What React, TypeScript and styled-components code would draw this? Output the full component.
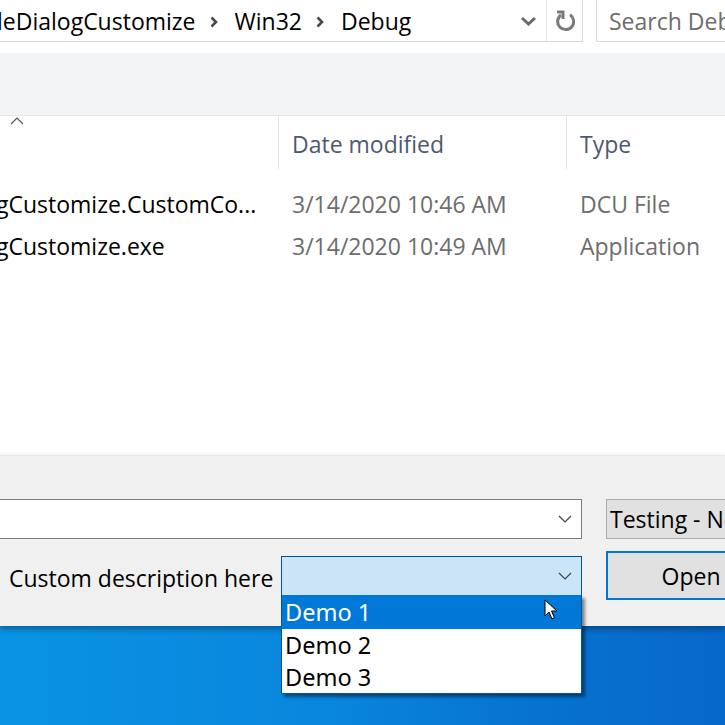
import React from "react";
import styled, { createGlobalStyle } from "styled-components";

const Global = createGlobalStyle`
  html, body { margin: 0; padding: 0; }
  body { width: 725px; height: 725px; overflow: hidden; font-family: "Open Sans", "Noto Sans", sans-serif; }
  * { box-sizing: border-box; }
`;

const Page = styled.div`
  width: 725px;
  height: 725px;
  display: flex;
  flex-direction: column;
  overflow: hidden;
  position: relative;
  background: #fff;
`;

const AddressRow = styled.div`
  height: 42px;
  display: flex;
  gap: 13px;
  background: #fff;
  flex-shrink: 0;
`;

const AddressBox = styled.div`
  width: 583px;
  display: flex;
  border-right: 1px solid #d9d9d9;
  border-bottom: 1px solid #d9d9d9;
`;

const Crumbs = styled.div`
  flex: 1;
  display: flex;
  align-items: center;
  margin-left: -3px;
  font-size: 23px;
  color: #000;
  white-space: nowrap;
  overflow: hidden;
`;

const Sep = styled.span`
  display: inline-flex;
  align-items: center;
  margin: 2px 17px 0 14px;
`;

const AddrIconCell = styled.div<{ $w: number; $divider?: boolean }>`
  width: ${(p) => p.$w}px;
  display: flex;
  align-items: center;
  justify-content: center;
  border-left: ${(p) => (p.$divider ? "1px solid #e3e3e3" : "none")};
`;

const SearchBox = styled.div`
  flex: 1;
  display: flex;
  align-items: center;
  padding-left: 12px;
  font-size: 23px;
  color: #6d6d6d;
  border-left: 1px solid #d9d9d9;
  border-bottom: 1px solid #d9d9d9;
  white-space: nowrap;
  overflow: hidden;
`;

const Gap = styled.div`
  height: 11px;
  flex-shrink: 0;
  background: #fff;
`;

const Toolbar = styled.div`
  height: 63px;
  flex-shrink: 0;
  background: #f3f4f6;
  border-bottom: 1px solid #e5e5e5;
`;

const FileList = styled.div`
  flex: 0 0 339px;
  background: #fff;
  display: flex;
  flex-direction: column;
`;

const Cols = "278px 288px 1fr";

const HeaderRow = styled.div`
  height: 53px;
  display: grid;
  grid-template-columns: ${Cols};
`;

const HeaderCell = styled.div<{ $first?: boolean }>`
  position: relative;
  display: flex;
  align-items: center;
  padding-left: 13px;
  padding-top: 2px;
  font-size: 23px;
  color: #4c5a6e;
  white-space: nowrap;
  border-left: ${(p) => (p.$first ? "none" : "1px solid #e5e5e5")};
`;

const SortArrow = styled.svg`
  position: absolute;
  left: 10px;
  top: 1px;
`;

const Rows = styled.div`
  padding-top: 14px;
  display: flex;
  flex-direction: column;
`;

const Row = styled.div`
  height: 42px;
  display: grid;
  grid-template-columns: ${Cols};
  align-items: center;
  font-size: 23px;
  white-space: nowrap;
`;

const Cell = styled.div<{ $muted?: boolean; $name?: boolean }>`
  padding-left: ${(p) => (p.$name ? "0" : "14px")};
  margin-left: ${(p) => (p.$name ? "-4px" : "0")};
  color: ${(p) => (p.$muted ? "#6d6d6d" : "#000")};
  overflow: hidden;
`;

const Panel = styled.div`
  flex: 0 0 171px;
  background: #f0f0f0;
  border-top: 1px solid #e8e8e8;
  box-shadow: 0 3px 6px rgba(0, 0, 0, 0.35);
  position: relative;
  z-index: 1;
  padding-top: 43px;
  display: grid;
  grid-template-columns: 582px 1fr;
  grid-template-rows: 40px 49px;
  column-gap: 24px;
  row-gap: 12px;
`;

const Combo = styled.div<{ $focus?: boolean }>`
  position: relative;
  height: 40px;
  display: flex;
  align-items: center;
  justify-content: flex-end;
  padding-right: 9px;
  background: ${(p) => (p.$focus ? "#cce4f7" : "#fff")};
  border: 1px solid ${(p) => (p.$focus ? "#005499" : "#7a7a7a")};
`;

const FileNameCombo = styled(Combo)`
  margin-left: -10px;
  align-self: start;
`;

const CustomLine = styled.div`
  display: flex;
  align-items: flex-end;
  padding-left: 9px;
`;

const Label = styled.div`
  font-size: 23px;
  color: #000;
  white-space: nowrap;
  padding-bottom: 6px;
`;

const CustomCombo = styled(Combo)`
  flex: 0 0 301px;
  margin-left: auto;
  height: 40px;
  margin-bottom: 4px;
`;

const DropList = styled.div`
  position: absolute;
  left: -1px;
  right: -1px;
  top: 38px;
  background: #fff;
  border: 1px solid #005499;
  border-top: none;
  box-shadow: 3px 3px 3px rgba(0, 0, 0, 0.45);
  font-family: "Noto Sans", "Open Sans", sans-serif;
  font-size: 23.5px;
  z-index: 5;
`;

const DropItem = styled.div<{ $active?: boolean }>`
  height: ${(p) => (p.$active ? "34px" : "32px")};
  display: flex;
  align-items: center;
  padding-left: 3px;
  background: ${(p) => (p.$active ? "#0078d7" : "#fff")};
  color: ${(p) => (p.$active ? "#fff" : "#000")};
  position: relative;
`;

const Cursor = styled.svg`
  position: absolute;
  left: 262px;
  top: 4px;
`;

const Button = styled.div<{ $default?: boolean }>`
  width: 170px;
  display: flex;
  align-items: center;
  justify-content: ${(p) => (p.$default ? "center" : "flex-start")};
  padding-left: ${(p) => (p.$default ? "0" : "3px")};
  font-size: 23px;
  color: #000;
  background: #e1e1e1;
  border: ${(p) => (p.$default ? "2px solid #0078d7" : "1px solid #adadad")};
  white-space: nowrap;
  overflow: hidden;
`;

const TestingButton = styled(Button)`
  height: 40px;
`;

const OpenButton = styled(Button)`
  height: 49px;
`;

const Desktop = styled.div`
  flex: 1;
  background: linear-gradient(90deg, #0a93e5 0%, #0986dd 45%, #0772d0 75%, #0768cb 100%);
`;

const Chevron = ({ color = "#444" }: { color?: string }) => (
  <svg width="14" height="8" viewBox="0 0 14 8">
    <path d="M1 1 L7 7 L13 1" fill="none" stroke={color} strokeWidth="1.2" />
  </svg>
);

const CrumbSep = () => (
  <svg width="8" height="12" viewBox="0 0 8 12">
    <path d="M1.5 1.5 L6 6 L1.5 10.5" fill="none" stroke="#4a4a4a" strokeWidth="2.6" />
  </svg>
);

export default function App() {
  return (
    <>
      <Global />
      <Page>
        <AddressRow>
          <AddressBox>
            <Crumbs>
              leDialogCustomize
              <Sep><CrumbSep /></Sep>
              Win32
              <Sep><CrumbSep /></Sep>
              Debug
            </Crumbs>
            <AddrIconCell $w={36}>
              <svg width="17" height="10" viewBox="0 0 17 10">
                <path d="M2 2 L8.5 8 L15 2" fill="none" stroke="#6a6a6a" strokeWidth="3" />
              </svg>
            </AddrIconCell>
            <AddrIconCell $w={36} $divider>
              <svg width="20" height="26" viewBox="0 0 20 26">
                <path d="M6 7 A8 8 0 1 0 15 6.8" fill="none" stroke="#7a7a7a" strokeWidth="3" />
                <path d="M2 4 L8 4 L8 11" fill="none" stroke="#7a7a7a" strokeWidth="3" />
              </svg>
            </AddrIconCell>
          </AddressBox>
          <SearchBox>Search Debug</SearchBox>
        </AddressRow>
        <Gap />
        <Toolbar />
        <FileList>
          <HeaderRow>
            <HeaderCell $first>
              <SortArrow width="14" height="8" viewBox="0 0 14 8">
                <path d="M1 7 L7 1 L13 7" fill="none" stroke="#555" strokeWidth="1.2" />
              </SortArrow>
            </HeaderCell>
            <HeaderCell>Date modified</HeaderCell>
            <HeaderCell>Type</HeaderCell>
          </HeaderRow>
          <Rows>
            <Row>
              <Cell $name>gCustomize.CustomCo...</Cell>
              <Cell $muted>3/14/2020 10:46 AM</Cell>
              <Cell $muted>DCU File</Cell>
            </Row>
            <Row>
              <Cell $name>gCustomize.exe</Cell>
              <Cell $muted>3/14/2020 10:49 AM</Cell>
              <Cell $muted>Application</Cell>
            </Row>
          </Rows>
        </FileList>
        <Panel>
          <FileNameCombo>
            <Chevron />
          </FileNameCombo>
          <TestingButton>Testing - None</TestingButton>
          <CustomLine>
            <Label>Custom description here</Label>
            <CustomCombo $focus>
              <Chevron />
              <DropList>
                <DropItem $active>
                  Demo 1
                  <Cursor width="14" height="22" viewBox="0 0 14 22">
                    <path
                      d="M1 1 L1 17 L5 13 L8 20 L10.5 19 L7.5 12 L13 12 Z"
                      fill="#fff"
                      stroke="#000"
                      strokeWidth="1"
                    />
                  </Cursor>
                </DropItem>
                <DropItem>Demo 2</DropItem>
                <DropItem>Demo 3</DropItem>
              </DropList>
            </CustomCombo>
          </CustomLine>
          <OpenButton $default>Open</OpenButton>
        </Panel>
        <Desktop />
      </Page>
    </>
  );
}
